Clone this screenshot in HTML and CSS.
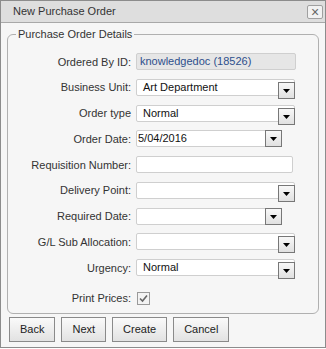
FILE: index.html
```html
<!DOCTYPE html>
<html lang="en">
<head>
    <meta charset="UTF-8">
    <title>New Purchase Order</title>
    <link rel="stylesheet" href="styles.css">
</head>
<body>
    <div class="dialog">
        <div class="titlebar">
            <span class="title">New Purchase Order</span>
            <span class="close">&times;</span>
        </div>

        <fieldset class="details">
            <legend>Purchase Order Details</legend>

            <div class="row">
                <label>Ordered By ID:</label>
                <div class="field readonly w-full">knowledgedoc (18526)</div>
            </div>
            <div class="row">
                <label>Business Unit:</label>
                <div class="field select w-select"><span class="value">Art Department</span><span class="drop"><svg width="7" height="4" viewBox="0 0 7 4"><path d="M0 0h7L3.5 4z" fill="#000"/></svg></span></div>
            </div>
            <div class="row">
                <label>Order type</label>
                <div class="field select w-select"><span class="value">Normal</span><span class="drop"><svg width="7" height="4" viewBox="0 0 7 4"><path d="M0 0h7L3.5 4z" fill="#000"/></svg></span></div>
            </div>
            <div class="row">
                <label>Order Date:</label>
                <div class="field date w-date"><span class="value">5/04/2016</span><span class="drop"><svg width="7" height="4" viewBox="0 0 7 4"><path d="M0 0h7L3.5 4z" fill="#000"/></svg></span></div>
            </div>
            <div class="row">
                <label>Requisition Number:</label>
                <div class="field w-text"></div>
            </div>
            <div class="row">
                <label>Delivery Point:</label>
                <div class="field select w-select"><span class="value"></span><span class="drop"><svg width="7" height="4" viewBox="0 0 7 4"><path d="M0 0h7L3.5 4z" fill="#000"/></svg></span></div>
            </div>
            <div class="row">
                <label>Required Date:</label>
                <div class="field date w-date"><span class="value"></span><span class="drop"><svg width="7" height="4" viewBox="0 0 7 4"><path d="M0 0h7L3.5 4z" fill="#000"/></svg></span></div>
            </div>
            <div class="row">
                <label>G/L Sub Allocation:</label>
                <div class="field select w-select"><span class="value"></span><span class="drop"><svg width="7" height="4" viewBox="0 0 7 4"><path d="M0 0h7L3.5 4z" fill="#000"/></svg></span></div>
            </div>
            <div class="row">
                <label>Urgency:</label>
                <div class="field select w-select"><span class="value">Normal</span><span class="drop"><svg width="7" height="4" viewBox="0 0 7 4"><path d="M0 0h7L3.5 4z" fill="#000"/></svg></span></div>
            </div>
            <div class="row row-check">
                <label>Print Prices:</label>
                <span class="checkbox"><svg width="11" height="11" viewBox="0 0 11 11"><path d="M2 5.5l2.5 2.5L9 2.5" fill="none" stroke="#666" stroke-width="1.6"/></svg></span>
            </div>
        </fieldset>

        <div class="buttons">
            <button type="button">Back</button>
            <button type="button">Next</button>
            <button type="button">Create</button>
            <button type="button">Cancel</button>
        </div>
    </div>
</body>
</html>
```

FILE: styles.css
```css
* {
    margin: 0;
    padding: 0;
    box-sizing: border-box;
}

body {
    font-family: "Liberation Sans", Arial, sans-serif;
    font-size: 11px;
    color: #333;
    background-color: #fff;
}

.dialog {
    width: 326px;
    height: 348px;
    border: 1px solid #8c8c8c;
    background-color: #f6f6f6;
}

.titlebar {
    display: flex;
    align-items: center;
    justify-content: space-between;
    height: 22px;
    padding: 0 2px 0 12px;
    background-color: #dedede;
    border-bottom: 1px solid #a8a8a8;
}

.title {
    line-height: 21px;
    color: #333;
}

.close {
    display: flex;
    align-items: center;
    justify-content: center;
    width: 16px;
    height: 14px;
    margin-top: 1px;
    border: 1px solid #a0a0a0;
    border-radius: 2px;
    background-color: #f2f2f2;
    color: #666;
    font-size: 14px;
    line-height: 12px;
}

.details {
    display: flex;
    flex-direction: column;
    gap: 8.75px;
    margin: 5px 6px 0;
    padding: 12px 0 6px;
    border: 1px solid #b0b0b0;
    border-radius: 6px;
}

.details legend {
    margin-left: 8px;
    padding: 0 2px;
    line-height: 13px;
    color: #333;
}

.row {
    display: flex;
    align-items: center;
    height: 17px;
}

.row label {
    width: 123px;
    margin-right: 5px;
    text-align: right;
    color: #333;
}

.row-check {
    margin-top: 5px;
}

.field {
    display: flex;
    height: 17px;
    line-height: 15px;
    border: 1px solid #cfcfcf;
    border-radius: 2px;
    background-color: #fff;
    color: #111;
}

.w-full { width: 160px; }
.w-select { width: 159px; }
.w-text { width: 157px; }
.w-date { width: 146px; }

.readonly {
    padding-left: 3px;
    background-color: #e6e6e6;
    color: #2d4f8c;
}

.field .value {
    flex: 1;
    padding-left: 6px;
}

.date .value {
    padding-left: 1px;
}

.drop {
    display: flex;
    align-items: center;
    justify-content: center;
    width: 17px;
    height: 17px;
    padding-top: 1px;
    border: 1px solid #777;
    background: linear-gradient(#f8f8f8, #e0e0e0);
}

.select .drop {
    margin-top: 2px;
    margin-right: -1px;
}

.date .drop {
    margin: -1px -1px 0 0;
}

.checkbox {
    display: flex;
    align-items: center;
    justify-content: center;
    width: 13px;
    height: 13px;
    margin-left: 1px;
    border: 1px solid #9a9a9a;
    background-color: #f3f3f3;
}

.buttons {
    display: flex;
    gap: 6px;
    padding: 3px 0 0 8px;
}

.buttons button {
    height: 25px;
    padding: 0 10px;
    font-family: "Liberation Sans", Arial, sans-serif;
    font-size: 11px;
    color: #222;
    border: 1px solid #8a8a8a;
    background: linear-gradient(#fafafa, #e2e2e2);
    cursor: pointer;
}
```
